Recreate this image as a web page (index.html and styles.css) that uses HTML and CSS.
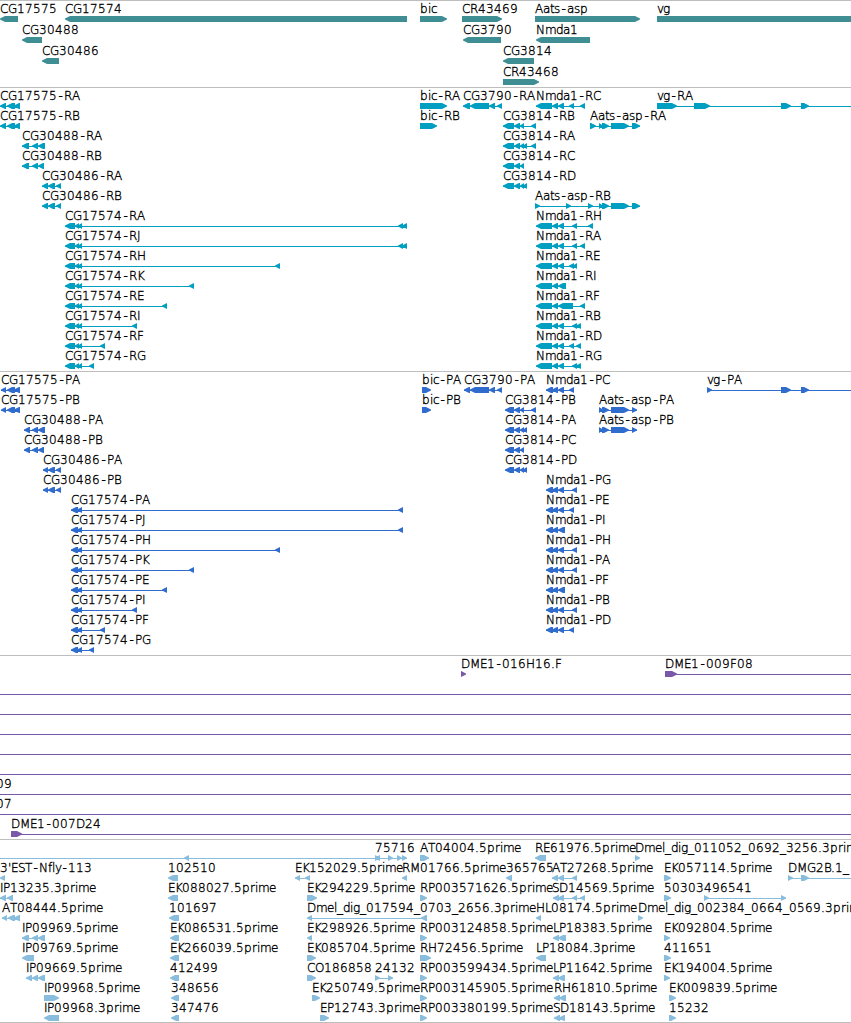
FILE: index.html
```
<!DOCTYPE html>
<html lang="en">
<head>
  <meta charset="UTF-8">
  <title>Genome tracks</title>
  <link rel="stylesheet" href="styles.css">
</head>
<body>

<div class="browser" id="browser"></div>

<script src="tracks.js"></script>
</body>
</html>
```

FILE: styles.css
```
body {
  margin: 0;
  background: #fff;
  overflow: hidden;
}
.browser {
  display: flex;
  flex-direction: column;
  width: 851px;
  border-bottom: 1px solid #bebebe;
}
.track {
  display: flex;
  flex-direction: column;
  border-top: 1px solid #bebebe;
  padding-bottom: 3px;
}
.row {
  display: block;
  width: 851px;
  height: 20px;
  overflow: visible;
}
.row text {
  font-family: "DejaVu Sans", sans-serif;
  font-size: 12px;
  font-weight: 200;
  fill: #000;
  stroke: #000;
  stroke-width: 0.35px;
}
.row path {
  fill: currentColor;
}
.gene {
  color: #3e8e94;
  padding-bottom: 2px;
}
.gene .row {
  height: 21px;
}
.mrna {
  color: #009fc1;
}
.cds {
  color: #306ccd;
}
.bac {
  color: #7957a9;
}
.est {
  color: #88bddd;
  padding-bottom: 2px;
}
```

FILE: tracks.js
```
// feature: label | label x | strand | exons
const tracks = [
  { name: 'gene', rows: [
    ['CG17575|0|<|0-18', 'CG17574|65|<|65-407', 'bic|420|>|420-447', 'CR43469|462|>|462-502', 'Aats-asp|535|>|535-640', 'vg|657|>|657-870'],
    ['CG30488|22|<|22-42', 'CG3790|463|<|463-501', 'Nmda1|536|<|536-590'],
    ['CG30486|42|<|42-59', 'CG3814|503|<|503-534'],
    ['CR43468|503|>|503-539']
  ]},
  { name: 'mrna', rows: [
    ['CG17575-RA|0|<|0-6 7-15 14-20', 'bic-RA|420|>|420-447', 'CG3790-RA|463|<|463-470 470-489 489-495 497-502', 'Nmda1-RC|536|<|536-552 552-558 558-564 569-574 580-585', 'vg-RA|657|>|657-677 694-710 781-791 801-809 870-880'],
    ['CG17575-RB|0|<|0-6 7-15 14-20', 'bic-RB|420|>|420-437', 'CG3814-RB|503|<|503-514 514-520 520-524 531-536', 'Aats-asp-RA|590|>|590-596 599-603 602-609 611-629 632-640'],
    ['CG30488-RA|22|<|22-29 32-38 38-45', 'CG3814-RA|503|<|503-514 514-520 520-524 523-527 531-536'],
    ['CG30488-RB|22|<|22-29 32-38 38-44', 'CG3814-RC|503|<|503-514 514-520 520-524'],
    ['CG30486-RA|42|<|42-48 48-55 56-61', 'CG3814-RD|503|<|503-514 514-520 520-524 523-527'],
    ['CG30486-RB|42|<|42-48 48-55 56-61', 'Aats-asp-RB|535|>|535-540 566-571 588-593 599-603 602-609 611-629 632-640'],
    ['CG17574-RA|65|<|65-75 75-79 78-82 398-403 402-407', 'Nmda1-RH|536|<|536-552 552-558 558-564 572-577 588-593'],
    ['CG17574-RJ|65|<|65-75 75-79 78-82 398-403 402-407', 'Nmda1-RA|536|<|536-552 552-558 558-564 572-577 580-585'],
    ['CG17574-RH|65|<|65-75 75-79 78-82 275-280', 'Nmda1-RE|536|<|536-552 552-558 558-564 569-574 573-577'],
    ['CG17574-RK|65|<|65-75 75-79 78-82 189-194', 'Nmda1-RI|536|<|536-552 552-558 558-566'],
    ['CG17574-RE|65|<|65-75 75-79 78-82 162-167', 'Nmda1-RF|536|<|536-552 552-558 558-573 580-585'],
    ['CG17574-RI|65|<|65-75 75-79 78-82 132-137', 'Nmda1-RB|536|<|536-552 552-558 558-564 572-577 576-581'],
    ['CG17574-RF|65|<|65-75 75-79 78-82 100-105', 'Nmda1-RD|536|<|536-552 552-558 558-564 569-574 576-581'],
    ['CG17574-RG|65|<|65-75 75-79 78-82 89-94', 'Nmda1-RG|536|<|536-552 552-558 558-564 572-577 576-581']
  ]},
  { name: 'cds', rows: [
    ['CG17575-PA|1|<|1-6 7-15 14-20', 'bic-PA|422|>|422-431', 'CG3790-PA|464|<|464-470 470-489 489-495 497-502', 'Nmda1-PC|546|<|546-553 552-558 558-564 569-574', 'vg-PA|707|>|707-712 781-791 801-809 870-880'],
    ['CG17575-PB|1|<|1-6 7-15 14-20', 'bic-PB|422|>|422-431', 'CG3814-PB|505|<|505-514 514-520 520-524 531-536', 'Aats-asp-PA|599|>|599-603 602-609 611-629 632-637'],
    ['CG30488-PA|24|<|24-30 32-38 38-45', 'CG3814-PA|505|<|505-514 514-520 520-524 523-527', 'Aats-asp-PB|599|>|599-603 602-609 611-629 632-637'],
    ['CG30488-PB|24|<|24-30 32-38 38-44', 'CG3814-PC|505|<|505-514 514-520 520-524'],
    ['CG30486-PA|43|<|43-48 48-55 56-61', 'CG3814-PD|505|<|505-514 514-520 520-524 523-527'],
    ['CG30486-PB|43|<|43-48 48-55 56-61', 'Nmda1-PG|546|<|546-553 552-558 558-564 572-577'],
    ['CG17574-PA|71|<|71-78 77-82 398-403', 'Nmda1-PE|546|<|546-553 552-558 558-564 569-574'],
    ['CG17574-PJ|71|<|71-78 77-82 398-403', 'Nmda1-PI|546|<|546-553 552-558 558-565'],
    ['CG17574-PH|71|<|71-78 77-82 275-280', 'Nmda1-PH|546|<|546-553 552-558 558-564 572-577'],
    ['CG17574-PK|71|<|71-78 77-82 189-194', 'Nmda1-PA|546|<|546-553 552-558 558-564 572-577'],
    ['CG17574-PE|71|<|71-78 77-82 162-167', 'Nmda1-PF|546|<|546-553 552-558 558-565'],
    ['CG17574-PI|71|<|71-78 77-82 132-137', 'Nmda1-PB|546|<|546-553 552-558 558-564 572-577'],
    ['CG17574-PF|71|<|71-78 77-82 100-105', 'Nmda1-PD|546|<|546-553 552-558 558-564 569-574'],
    ['CG17574-PG|71|<|71-78 77-82 89-94']
  ]},
  { name: 'bac', rows: [
    ['DME1-016H16.F|461|>|461-466', 'DME1-009F08|665|>|665-677 870-880'],
    ['||>|-20--10 870-880'],
    ['||>|-20--10 870-880'],
    ['||>|-20--10 870-880'],
    ['||>|-20--10 870-880'],
    ['||>|-20--10 870-880'],
    ['09|-4|>|-20--10 870-880'],
    ['07|-4|>|-20--10 870-880'],
    ['DME1-007D24|11|>|11-22 870-880']
  ]},
  { name: 'est', rows: [
    ['||<|-20--10 184-189 375-380', '75716|375|>|375-380 388-393 397-402 402-407', 'AT04004.5prime|420|>|420-429', 'RE61976.5prime|535|<|535-546', 'Dmel_dig_011052_0692_3256.3prime|635|>|635-640'],
    ["3'EST-Nfly-113|0|<|0-5", '102510|168|<|168-178', 'EK152029.5prime|295|<|295-300 305-310', 'RM01766.5prime|402|<|402-407', '365765|506|<|506-512', 'AT27268.5prime|552|<|552-558 558-564 572-577', 'EK057114.5prime|664|>|664-671', 'DMG2B.1_|788|>|788-793 801-809 870-880'],
    ['IP13235.3prime|0|<|0-6 7-13', 'EK088027.5prime|168|<|168-178', 'EK294229.5prime|307|>|307-317', 'RP003571626.5prime|420|>|420-427', 'SD14569.5prime|552|<|553-559 558-564 572-577 580-585', '50303496541|664|>|664-671', '||>|704-709 781-786'],
    ['AT08444.5prime|2|<|2-7 8-15 14-20', '101697|169|<|169-179', 'Dmel_dig_017594_0703_2656.3prime|307|<|307-312 421-427', 'HL08174.5prime|536|<|536-541', 'Dmel_dig_002384_0664_0569.3prime|638|>|638-643'],
    ['IP09969.5prime|22|<|22-29 32-38 38-45', 'EK086531.5prime|170|<|170-179', 'EK298926.5prime|307|<|307-312', 'RP003124858.5prime|420|>|420-427', 'LP18383.5prime|553|<|553-559 558-566', 'EK092804.5prime|664|>|664-670'],
    ['IP09769.5prime|22|<|22-34', 'EK266039.5prime|170|<|170-179', 'EK085704.5prime|307|>|307-316', 'RH72456.5prime|420|>|420-431', 'LP18084.3prime|536|<|536-546', '411651|664|>|664-671'],
    ['IP09669.5prime|26|<|26-32 32-38 38-45', '412499|170|<|170-179', 'CO186858|307|>|307-316', '24132|375|>|375-380 388-393', 'RP003599434.5prime|420|>|420-427', 'LP11642.5prime|553|<|553-559 558-565', 'EK194004.5prime|664|>|664-670'],
    ['IP09968.5prime|44|>|44-59', '348656|171|<|171-179', 'EK250749.5prime|312|>|312-320', 'RP003145905.5prime|420|>|420-427', 'RH61810.5prime|554|<|554-560 559-566', 'EK009839.5prime|669|>|669-676'],
    ['IP09968.3prime|44|<|44-59', '347476|171|<|171-179', 'EP12743.3prime|320|>|320-329', 'RP003380199.5prime|420|>|420-427', 'SD18143.5prime|553|<|554-560 559-565', '15232|669|>|669-676']
  ]}
];

// label glyph advances in px, digits are 8
const advance = {
  A: 8, B: 7, C: 8, D: 9, E: 7, F: 7, G: 9, H: 9, I: 3, J: 4, K: 7, L: 6, M: 10, N: 9,
  O: 9, P: 7, R: 8, S: 7, T: 7, a: 7, b: 8, c: 6, d: 7, e: 7, f: 4, g: 7, i: 3, l: 3,
  m: 11, p: 8, r: 5, s: 6, t: 4, v: 6, y: 6, '-': 7, '.': 4, '_': 6, "'": 3
};

function labelPositions(label, x) {
  return [...label].map(c => {
    // hyphen sits in the middle of its cell
    const at = c === '-' ? x + 1.5 : x;
    x += advance[c] || 8;
    return at;
  }).join(' ');
}

function exonPath(strand, x1, x2) {
  const head = Math.min(5, x2 - x1);
  if (strand === '<') {
    return `M${x1} 17.5L${x1 + head} 15H${x2}V21H${x1 + head}L${x1} 18.5z`;
  }
  return `M${x2} 17.5L${x2 - head} 15H${x1}V21H${x2 - head}L${x2} 18.5z`;
}

function drawFeature(feature) {
  const [label, x, strand, spans] = feature.split('|');
  const exons = spans.split(' ').map(s => s.match(/^(-?\d+)-(-?\d+)$/).slice(1).map(Number));
  const start = exons[0][0];
  const end = exons[exons.length - 1][1];
  let d = exons.map(e => exonPath(strand, e[0], e[1])).join('');
  let svg = `<path d="${d}"/>`;
  if (exons.length > 1) {
    svg += `<path d="M${start} 18H${end}V19H${start}z"/>`;
  }
  if (label) {
    svg += `<text x="${labelPositions(label, Number(x))}" y="12">${label}</text>`;
  }
  return svg;
}

document.getElementById('browser').innerHTML = tracks.map(track =>
  `<div class="track ${track.name}">` +
  track.rows.map(row => `<svg class="row">${row.map(drawFeature).join('')}</svg>`).join('') +
  '</div>'
).join('');
```
